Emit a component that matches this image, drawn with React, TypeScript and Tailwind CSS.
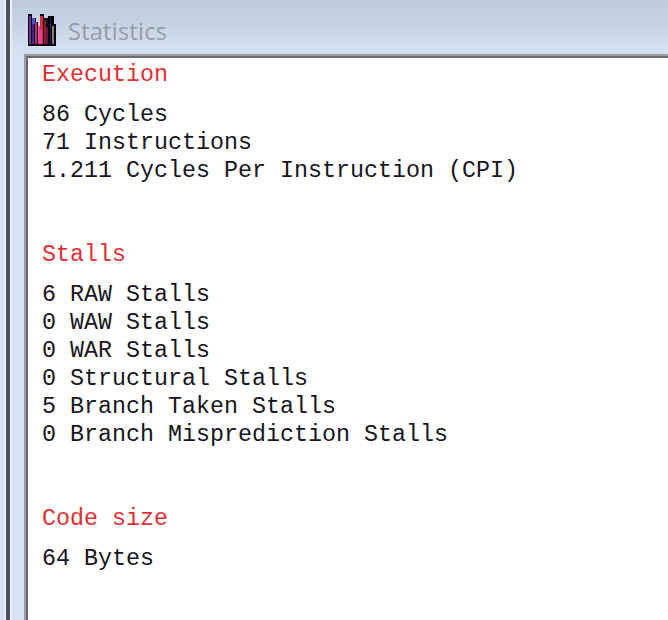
const sections = [
  {
    title: "Execution",
    lines: ["86 Cycles", "71 Instructions", "1.211 Cycles Per Instruction (CPI)"],
  },
  {
    title: "Stalls",
    lines: [
      "6 RAW Stalls",
      "0 WAW Stalls",
      "0 WAR Stalls",
      "0 Structural Stalls",
      "5 Branch Taken Stalls",
      "0 Branch Misprediction Stalls",
    ],
  },
  { title: "Code size", lines: ["64 Bytes"] },
];

function BooksIcon() {
  return (
    <svg width="28" height="32" viewBox="0 0 28 32" shapeRendering="crispEdges" className="shrink-0">
      <path d="M0 0h4v4h4v4h2v4h2V0h4v4h4V2h6v8h2v22H0z" fill="#08020c" />
      <path d="M1 2h2v28H1z" fill="#71358e" />
      <path d="M4 4h3v6H4z" fill="#4855d0" />
      <path d="M4 10h2v20H4z" fill="#3c249b" />
      <path d="M7 8h2v22H7z" fill="#b92b65" />
      <path d="M10 12h3v18h-3z" fill="#ed3fa5" />
      <path d="M12 2h3v28h-3z" fill="#d52a3e" />
      <path d="M12 16h2v14h-2z" fill="#ed3f8a" />
      <path d="M16 6h2v24h-2z" fill="#871e2c" />
      <path d="M18 13h2v17h-2z" fill="#651344" />
      <path d="M22 4h1v26h-1z" fill="#241e70" />
      <path d="M24 12h2v18h-2z" fill="#898357" />
    </svg>
  );
}

export default function App() {
  return (
    <div className="flex h-[620px] w-[668px] overflow-hidden bg-[#d9e4f4]">
      <div className="w-1 shrink-0 bg-[#d7e3f5]" />
      <div className="w-0.5 shrink-0 bg-[#e9eff7]" />
      <div className="w-1 shrink-0 bg-[#505154]" />
      <div className="w-0.5 shrink-0 bg-[#edf1f7]" />
      <div className="flex min-w-0 flex-1 flex-col bg-[linear-gradient(to_bottom,#bdcadc_0px,#c7d4e4_25px,#d4e1ef_50px,#d7e3f5_58px)] pl-3">
        <header className="flex h-[54px] shrink-0 items-start pl-1 pt-3.5">
          <BooksIcon />
          <h1 className="ml-3 mt-px whitespace-nowrap font-['Open_Sans',sans-serif] text-[23.5px] leading-8 tracking-[0.25px] text-[#989da3]">
            Statistics
          </h1>
        </header>
        <main className="min-h-0 flex-1 border-l-2 border-t-2 border-[#9b9da5]">
          <div className="h-full border-l-2 border-t-2 border-[#69696e] bg-white pl-3.5 pt-[3px] font-['Liberation_Mono',monospace] text-[23.33px] leading-7 text-[#17151d]">
            {sections.map((section) => (
              <section key={section.title} className="mb-14">
                <h2 className="mb-3 text-[#e03034]">{section.title}</h2>
                {section.lines.map((line) => (
                  <p key={line} className="whitespace-nowrap">{line}</p>
                ))}
              </section>
            ))}
          </div>
        </main>
      </div>
    </div>
  );
}
